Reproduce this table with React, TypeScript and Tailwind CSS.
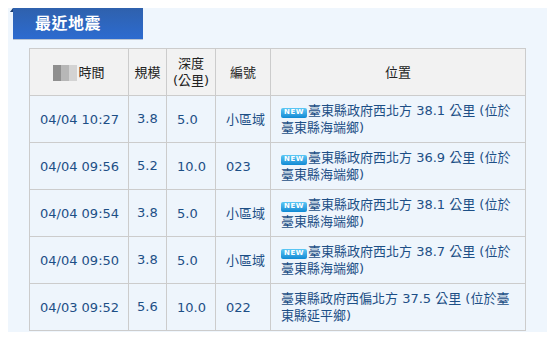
import React from 'react';

type Quake = {
  time: string;
  mag: string;
  depth: string;
  id: string;
  isNew: boolean;
  line1: string;
  line2: string;
};

const quakes: Quake[] = [
  { time: '04/04 10:27', mag: '3.8', depth: '5.0', id: '小區域', isNew: true, line1: '臺東縣政府西北方 38.1 公里 (位於', line2: '臺東縣海端鄉)' },
  { time: '04/04 09:56', mag: '5.2', depth: '10.0', id: '023', isNew: true, line1: '臺東縣政府西北方 36.9 公里 (位於', line2: '臺東縣海端鄉)' },
  { time: '04/04 09:54', mag: '3.8', depth: '5.0', id: '小區域', isNew: true, line1: '臺東縣政府西北方 38.1 公里 (位於', line2: '臺東縣海端鄉)' },
  { time: '04/04 09:50', mag: '3.8', depth: '5.0', id: '小區域', isNew: true, line1: '臺東縣政府西北方 38.7 公里 (位於', line2: '臺東縣海端鄉)' },
  { time: '04/03 09:52', mag: '5.6', depth: '10.0', id: '022', isNew: false, line1: '臺東縣政府西偏北方 37.5 公里 (位於臺', line2: '東縣延平鄉)' },
];

const NewBadge = () => (
  <span className="inline-flex items-center justify-center w-[26px] h-[10px] mr-px align-[1px] rounded-[2px] bg-gradient-to-b from-[#5cc8f5] to-[#0b8ad4] text-white text-[7px] font-bold leading-none tracking-[0.5px]">
    NEW
  </span>
);

export default function App() {
  const font = { fontFamily: '"DejaVu Sans", "Noto Sans CJK TC", sans-serif' };
  const th = 'border border-[#cccccc] bg-[#f2f2f2] font-normal text-center text-[#222] leading-[17px]';
  const td = 'border border-[#cccccc] pl-[10px] text-[#1d4f86] leading-[17px]';

  return (
    <div className="bg-white w-[550px] h-[344px] px-[8px] pt-[12px]" style={font}>
      <div className="relative bg-[#eff6fd] w-[539px] h-[324px]">
        {/* header tab */}
        <div className="relative -mt-[4px] ml-[5px] w-[130px] h-[31px] bg-gradient-to-b from-[#2f61ad] to-[#2c6bd0] shadow-[0_1px_0_#b9c4d2] flex items-center pl-[22px]">
          <span className="text-white text-[16px] font-bold tracking-[0.5px]">最近地震</span>
          <span className="absolute -left-[3px] top-0 w-0 h-0 border-t-[4px] border-t-transparent border-r-[3px] border-r-[#1c3f73]" />
        </div>

        <table className="ml-[21px] mt-[9px] w-[497px] table-fixed border-collapse text-[13px]">
          <colgroup>
            <col className="w-[99px]" />
            <col className="w-[38px]" />
            <col className="w-[49px]" />
            <col className="w-[55px]" />
            <col />
          </colgroup>
          <thead>
            <tr className="h-[47px]">
              <th className={th}>
                <span className="inline-flex items-center align-middle">
                  <span className="inline-flex mr-px">
                    <span className="w-[8px] h-[16px] bg-[#8f8f8f]" />
                    <span className="w-[8px] h-[16px] bg-[#b7b7b7]" />
                    <span className="w-[8px] h-[16px] bg-[#d3d3d3]" />
                  </span>
                  時間
                </span>
              </th>
              <th className={th}>規模</th>
              <th className={th}>
                深度
                <br />
                (公里)
              </th>
              <th className={th}>編號</th>
              <th className={th}>位置</th>
            </tr>
          </thead>
          <tbody>
            {quakes.map((q, i) => (
              <tr key={i} className="h-[47px] bg-[#eef5fc]">
                <td className={td}>{q.time}</td>
                <td className="border border-[#cccccc] pl-[8px] text-[#1d4f86]">{q.mag}</td>
                <td className={td}>{q.depth}</td>
                <td className={td}>{q.id}</td>
                <td className={td}>
                  <div>
                    {q.isNew && <NewBadge />}
                    {q.line1}
                  </div>
                  <div>{q.line2}</div>
                </td>
              </tr>
            ))}
          </tbody>
        </table>
      </div>
    </div>
  );
}
